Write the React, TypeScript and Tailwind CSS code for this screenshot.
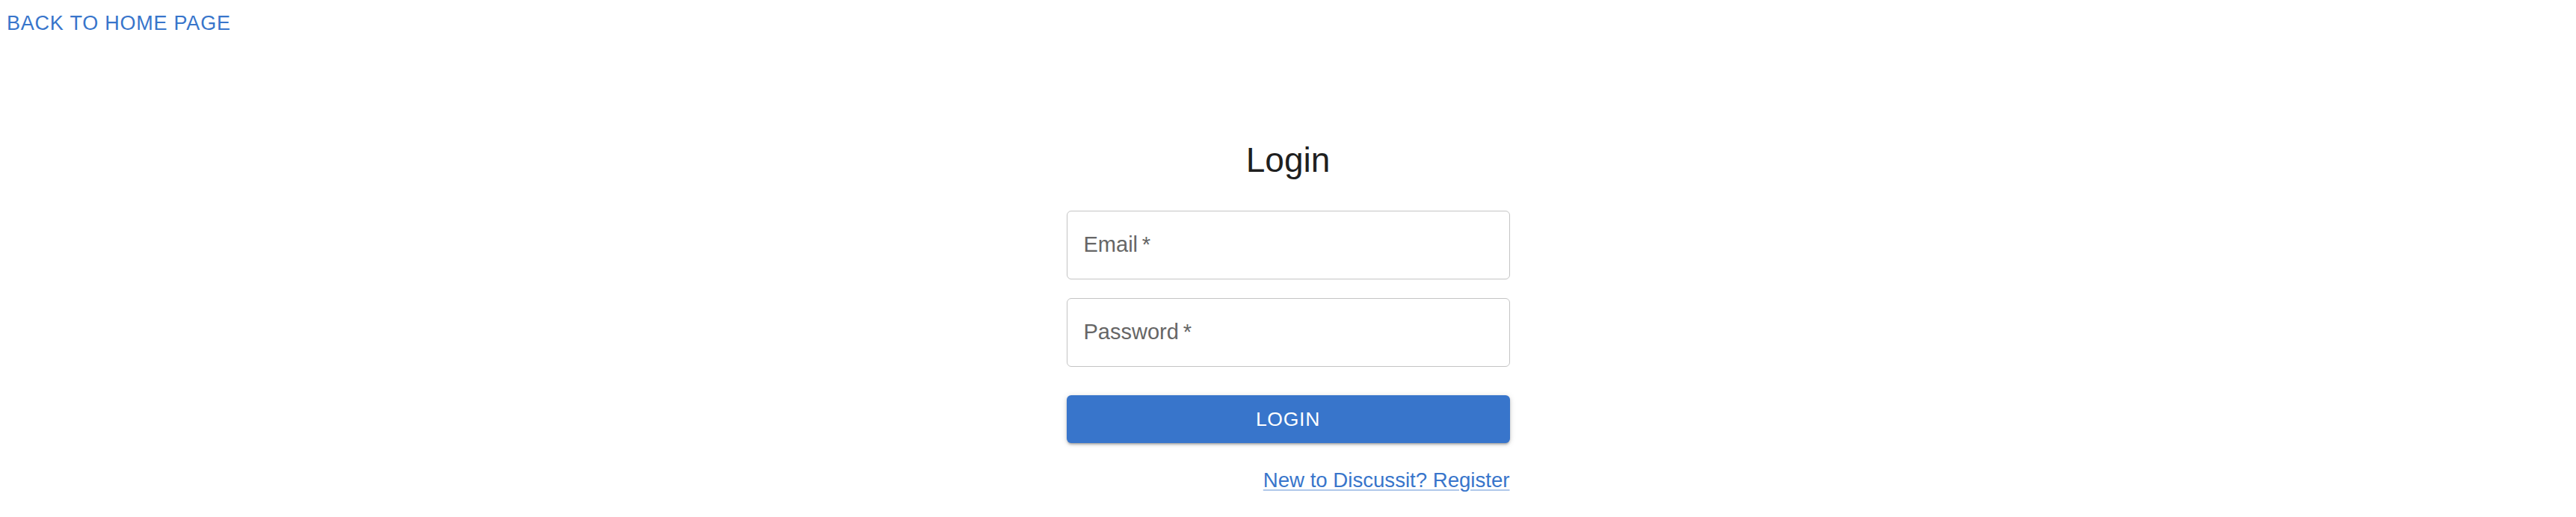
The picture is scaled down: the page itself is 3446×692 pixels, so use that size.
import { useState } from 'react'

const font = "font-['Liberation_Sans',Arial,Helvetica,sans-serif]"

interface FieldProps {
  label: string
  type?: string
  value: string
  onChange: (v: string) => void
}

// Outlined text field, label sits inside while the input is empty
function OutlinedField({ label, type = 'text', value, onChange }: FieldProps) {
  return (
    <label className="relative flex h-[92px] w-full items-center rounded-[6px] border border-[#c4c4c4] pb-[2px] pl-[22px] pr-[22px]">
      {!value && (
        <span className="pointer-events-none absolute left-[22px] text-[29px] leading-none text-[#666666]">
          {label}
          {'\u2009*'}
        </span>
      )}
      <input
        type={type}
        value={value}
        onChange={(e) => onChange(e.target.value)}
        className="w-full bg-transparent text-[29px] leading-none text-[#212121] outline-none"
      />
    </label>
  )
}

export default function App() {
  const [email, setEmail] = useState('')
  const [password, setPassword] = useState('')

  return (
    <div className={`min-h-screen bg-white ${font}`}>
      {/* Header link */}
      <div className="h-[191px] pl-[9px] pt-[18px]">
        <a
          href="#"
          className="text-[27px] uppercase leading-none tracking-[0.02857em] text-[#3875cb]"
        >
          Back to Home Page
        </a>
      </div>

      {/* Login form */}
      <div className="mx-auto flex w-[593px] flex-col">
        <h1 className="h-[46px] text-center text-[46px] font-normal leading-none text-[#1f1f1f]">
          Login
        </h1>

        <div className="mt-[45px]">
          <OutlinedField label="Email" value={email} onChange={setEmail} />
        </div>
        <div className="mt-[25px]">
          <OutlinedField label="Password" type="password" value={password} onChange={setPassword} />
        </div>

        <button
          type="button"
          className="mt-[38px] flex h-[64px] w-full items-center justify-center rounded-[6px] bg-[#3875cb] text-[26.5px] uppercase leading-none tracking-[0.02857em] text-white shadow-[0_3px_3px_-2px_rgba(0,0,0,0.3),0_2px_4px_0_rgba(0,0,0,0.14),0_1px_8px_0_rgba(0,0,0,0.12)]"
        >
          Login
        </button>

        <div className="mt-[36px] flex justify-end">
          <a
            href="#"
            className="text-[27.6px] leading-none text-[#3875cb] underline decoration-[#3875cb]/40 decoration-2 underline-offset-[3px]"
          >
            New to Discussit? Register
          </a>
        </div>
      </div>
    </div>
  )
}
